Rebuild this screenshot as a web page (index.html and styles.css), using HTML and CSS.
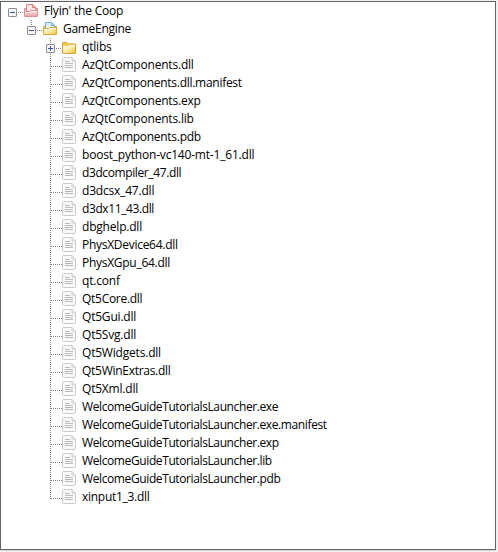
FILE: index.html
```
<!DOCTYPE html>
<html lang="en">
<head>
<meta charset="utf-8">
<title>Project files</title>
<link rel="stylesheet" href="styles.css">
</head>
<body>
<svg class="defs" width="0" height="0" aria-hidden="true">
  <defs>
    <linearGradient id="gold" x2="1" y2="1"><stop stop-color="#fffbe0"/><stop offset=".5" stop-color="#fdeca6"/><stop offset="1" stop-color="#efbd3b"/></linearGradient>
    <linearGradient id="rose" x2="0" y2="1"><stop stop-color="#fae3e3"/><stop offset="1" stop-color="#eaa3a5"/></linearGradient>
  </defs>
  <symbol id="minus" viewBox="0 0 9 9"><rect x=".5" y=".5" width="8" height="8" rx=".6" fill="#f5f5f5" stroke="#8b8b8b"/><path d="M2 4.5h5" stroke="#3c55a5"/></symbol>
  <symbol id="plus" viewBox="0 0 9 9"><rect x=".5" y=".5" width="8" height="8" rx=".6" fill="#f5f5f5" stroke="#8b8b8b"/><path d="M2 4.5h5M4.5 2v5" stroke="#3c55a5"/></symbol>
  <symbol id="root" viewBox="0 0 14 14"><path d="M.5 12V4.500h13V12" fill="#f0bcbe" stroke="#dc9296"/><path d="M2.500 8V.500h6.500l2.500 2.500V8" fill="#f9e6e6" stroke="#d98388"/><path d="M8.500 .500v3h3" fill="#edb9bb" stroke="#d98388"/><path d="M.5 12.500V7.500h5l1-1h7v6z" fill="url(#rose)" stroke="#dc9296"/><path d="M1 8.500h5l1-1h6" fill="none" stroke="#fdf1f1"/></symbol>
  <symbol id="open" viewBox="0 0 14 14"><path d="M.5 12V4.500h13V12" fill="#f5cf69" stroke="#dda735"/><path d="M2.500 7V.500h6.500l2.500 2.500V7" fill="#e0effc" stroke="#79aee0"/><path d="M8.500 .500v3h3" fill="#b6d7f5" stroke="#79aee0"/><path d="M.5 12.500V6.500h5l1-1h7v7z" fill="url(#gold)" stroke="#dda735"/><path d="M1 7.500h5l1-1h6" fill="none" stroke="#fffdf0"/></symbol>
  <symbol id="folder" viewBox="0 0 14 14"><path d="M.5 11.500v-11h4.500l1 1.500h7.500v9.500z" fill="#efc751" stroke="#dda735"/><path d="M1 11V4.500h4.500l1-1H13V11z" fill="url(#gold)"/><path d="M1 4.500h4.500l1-1H13" fill="none" stroke="#fffdf0"/></symbol>
  <symbol id="page" viewBox="0 0 14 15"><path d="M.5 13.500v-12q0-1 1-1h8.500l3.500 3.500v9.500q0 1-1 1h-11q-1 0-1-1z" fill="#fafafa" stroke="#cacaca"/><path d="M10 .5v3.500h3.500" fill="#ececec" stroke="#cacaca"/><path d="M3 4.500h5M3 6.500h8M3 8.500h8M3 10.500h8" stroke="#b9b9b9"/></symbol>
</svg>
<main class="panel">
  <div class="row level-1"><svg class="toggle"><use href="#minus"/></svg><i class="link"></i><svg class="icon"><use href="#root"/></svg><span>Flyin' the Coop</span></div>
  <div class="row level-2"><svg class="toggle"><use href="#minus"/></svg><i class="link"></i><svg class="icon"><use href="#open"/></svg><span>GameEngine</span></div>
  <div class="row level-3"><svg class="toggle"><use href="#plus"/></svg><i class="link"></i><svg class="icon"><use href="#folder"/></svg><span>qtlibs</span></div>
  <div class="files" id="files"></div>
</main>
<script src="tree.js"></script>
</body>
</html>
```
FILE: styles.css
```
body {
  margin: 0;
  height: 552px;
  padding-top: 1px;
  box-sizing: border-box;
  overflow: hidden;
  background: #f0f0f0;
  color: #000;
  font: 12px/18px "Open Sans", "Noto Sans", sans-serif;
}
.defs { position: absolute; }
.panel {
  box-sizing: border-box;
  width: 496px;
  height: 549px;
  border: 1px solid #646464;
  background: #fff;
  box-shadow: 0 1px #d9d9d9;
}
.row {
  position: relative;
  display: flex;
  height: 18px;
  white-space: nowrap;
}
.level-1 { padding-left: 7px; }
.level-2 { padding-left: 26px; }
.level-3 { padding-left: 45px; }
.toggle { width: 9px; height: 9px; margin-top: 6px; flex: none; }
.link {
  width: 6px;
  height: 1px;
  margin: 10px 0 0 1px;
  background: repeating-linear-gradient(90deg, #808080 0 1px, transparent 1px 2px);
}
.icon { width: 14px; height: 14px; margin-top: 2px; flex: none; }
.level-3 .icon { margin-top: 4px; }
.row span { margin-left: 6px; letter-spacing: -0.2px; }
.level-2 span { letter-spacing: -0.3px; }
.level-2::before, .level-3::before, .file::before {
  content: "";
  position: absolute;
  top: 0;
  width: 1px;
  height: 6px;
  background: repeating-linear-gradient(#808080 0 1px, transparent 1px 2px);
}
.level-2::before { left: 30px; }
.level-3::before, .file::before { left: 49px; }
.file { padding-left: 49px; }
.file::before { height: 18px; }
.file:first-child::before { top: -2px; height: 20px; }
.file:last-child::before { height: 11px; }
.file .link { width: 11px; margin-left: 1px; }
.file .icon { height: 15px; margin-top: 1px; }
.file .snug { letter-spacing: -0.28px; }
.file .tight { letter-spacing: -0.39px; }
.file .loose { letter-spacing: 0.15px; }
```
FILE: tree.js
```
const files = [
  ["AzQtComponents.dll"], ["AzQtComponents.dll.manifest", "snug"], ["AzQtComponents.exp"],
  ["AzQtComponents.lib"], ["AzQtComponents.pdb", "snug"], ["boost_python-vc140-mt-1_61.dll"],
  ["d3dcompiler_47.dll", "tight"], ["d3dcsx_47.dll"], ["d3dx11_43.dll", "tight"], ["dbghelp.dll"],
  ["PhysXDevice64.dll", "snug"], ["PhysXGpu_64.dll", "snug"], ["qt.conf"],
  ["Qt5Core.dll", "snug"], ["Qt5Gui.dll"], ["Qt5Svg.dll"], ["Qt5Widgets.dll"],
  ["Qt5WinExtras.dll", "snug"], ["Qt5Xml.dll"],
  ["WelcomeGuideTutorialsLauncher.exe", "tight"],
  ["WelcomeGuideTutorialsLauncher.exe.manifest", "tight"],
  ["WelcomeGuideTutorialsLauncher.exp", "tight"],
  ["WelcomeGuideTutorialsLauncher.lib", "tight"],
  ["WelcomeGuideTutorialsLauncher.pdb", "tight"], ["xinput1_3.dll", "snug"]
];
document.getElementById("files").innerHTML = files.map(([name, fit = ""]) =>
  `<div class="row file"><i class="link"></i><svg class="icon"><use href="#page"/></svg><span class="${fit}">${name}</span></div>`
).join("");
```
